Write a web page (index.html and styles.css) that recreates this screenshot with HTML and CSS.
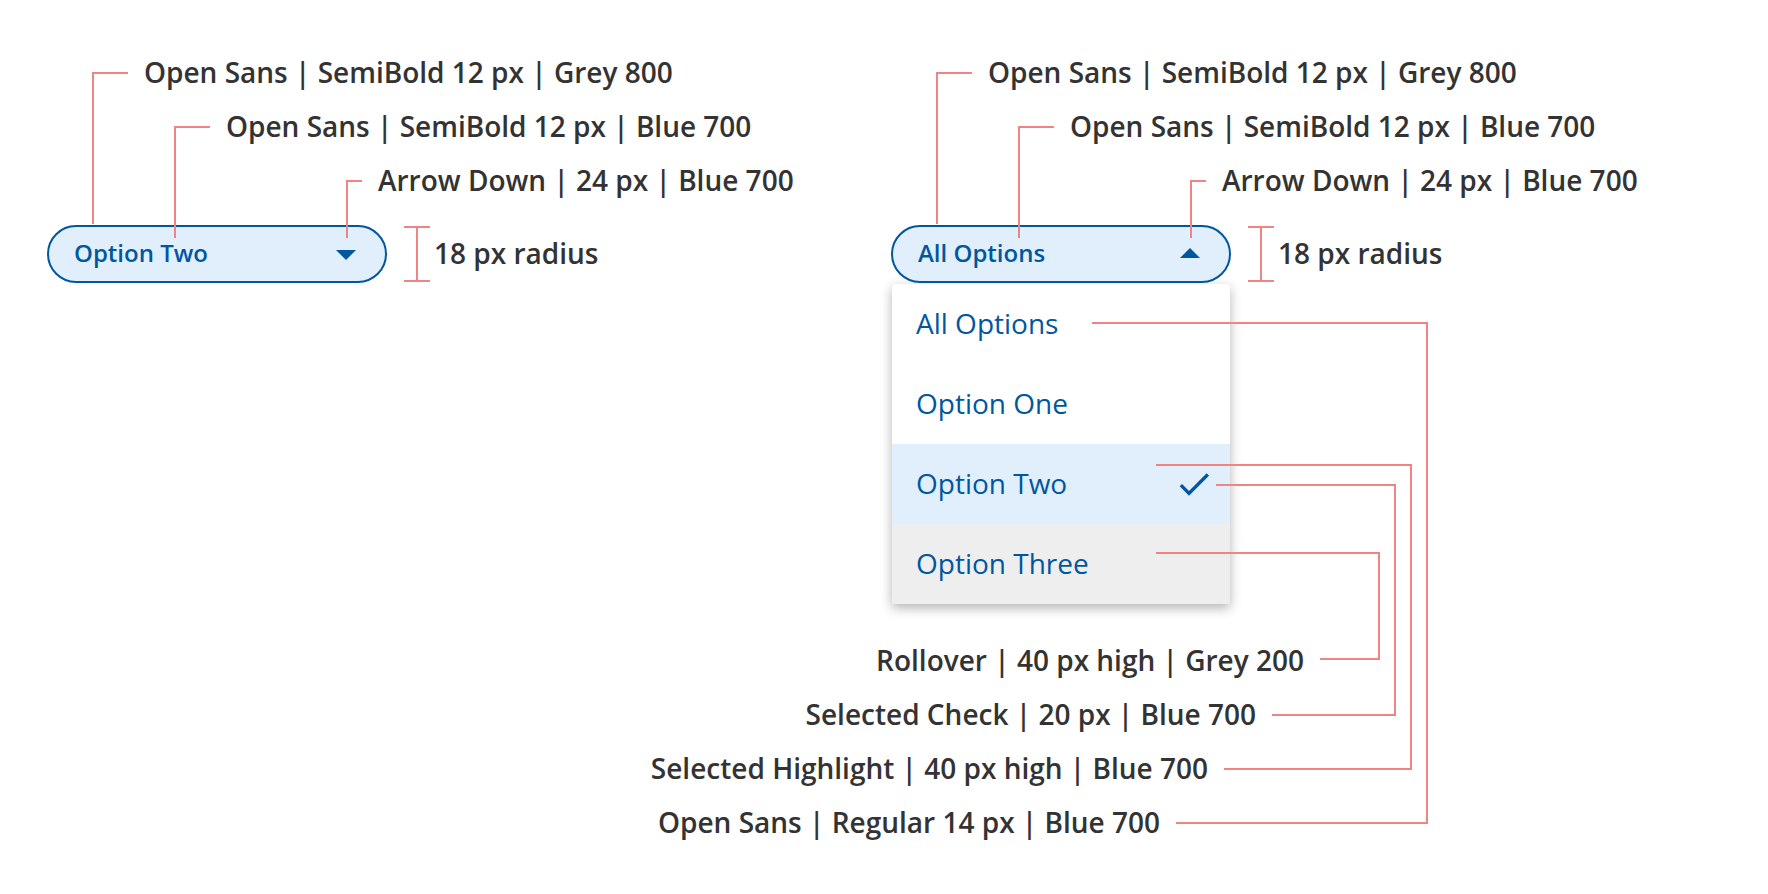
FILE: index.html
```html
<!DOCTYPE html>
<html lang="en">
<head>
<meta charset="utf-8">
<title>Dropdown specification</title>
<link rel="stylesheet" href="styles.css">
</head>
<body>
<main class="spec">
  <section class="panel" aria-label="Closed dropdown">
    <ul class="notes">
      <li class="note note-container">Open Sans | SemiBold 12 px | Grey 800</li>
      <li class="note note-text">Open Sans | SemiBold 12 px | Blue 700</li>
      <li class="note note-arrow">Arrow Down | 24 px | Blue 700</li>
    </ul>
    <div class="control">
      <button class="pill" type="button" aria-haspopup="true" aria-expanded="false">
        <span class="pill-label">Option Two</span>
        <svg class="arrow" viewBox="0 0 24 24" aria-hidden="true"><path d="M7 10l5 5 5-5z"/></svg>
      </button>
      <p class="radius">18 px radius</p>
    </div>
    <svg class="leaders" width="400" height="300" aria-hidden="true">
      <path d="M81 29H46V180M163 83H128V194M315 137H300V194"/>
      <path d="M357 183H383M370 183V237M357 237H383"/>
    </svg>
  </section>

  <section class="panel" aria-label="Open dropdown">
    <ul class="notes">
      <li class="note note-container">Open Sans | SemiBold 12 px | Grey 800</li>
      <li class="note note-text">Open Sans | SemiBold 12 px | Blue 700</li>
      <li class="note note-arrow">Arrow Down | 24 px | Blue 700</li>
    </ul>
    <div class="control">
      <button class="pill" type="button" aria-haspopup="true" aria-expanded="true">
        <span class="pill-label">All Options</span>
        <svg class="arrow" viewBox="0 0 24 24" aria-hidden="true"><path d="M7 14l5-5 5 5z"/></svg>
      </button>
      <p class="radius">18 px radius</p>
    </div>
    <ul class="menu">
      <li><button class="option" type="button"><span class="option-label">All Options</span></button></li>
      <li><button class="option" type="button"><span class="option-label">Option One</span></button></li>
      <li><button class="option selected" type="button"><span class="option-label">Option Two</span>
        <svg class="check" viewBox="0 0 24 24" aria-hidden="true"><path d="M9 16.17L4.83 12l-1.42 1.41L9 19 21 7l-1.41-1.41z"/></svg>
      </button></li>
      <li><button class="option hovered" type="button"><span class="option-label">Option Three</span></button></li>
    </ul>
    <ul class="footnotes">
      <li class="note foot-rollover">Rollover | 40 px high | Grey 200</li>
      <li class="note foot-check">Selected Check | 20 px | Blue 700</li>
      <li class="note foot-highlight">Selected Highlight | 40 px high | Blue 700</li>
      <li class="note foot-option">Open Sans | Regular 14 px | Blue 700</li>
    </ul>
    <svg class="leaders" width="540" height="800" aria-hidden="true">
      <path d="M81 29H46V180M163 83H128V194M315 137H300V194"/>
      <path d="M357 183H383M370 183V237M357 237H383"/>
      <path d="M265 509H488V615H429"/>
      <path d="M325 441H504V671H381"/>
      <path d="M265 421H520V725H333"/>
      <path d="M201 279H536V779H285"/>
    </svg>
  </section>
</main>
</body>
</html>
```
FILE: styles.css
```css
:root {
  --blue-700: #0057a0;
  --blue-50: #e1effd;
  --grey-200: #eeeeee;
  --grey-800: #333333;
  --leader: #f08383;
}

* {
  box-sizing: border-box;
}

body {
  margin: 0;
  background: #ffffff;
  color: var(--grey-800);
  font-family: "Open Sans", sans-serif;
  font-size: 28px;
}

ul {
  margin: 0;
  padding: 0;
  list-style: none;
}

button {
  font-family: inherit;
  color: var(--blue-700);
  cursor: pointer;
}

.spec {
  display: grid;
  grid-template-columns: 1fr 1fr;
  padding: 44px 33px 36px 47px;
}

.panel {
  position: relative;
}

.notes {
  padding-top: 1px;
}

.note {
  display: flex;
  font-weight: 600;
  line-height: 54px;
  white-space: nowrap;
}

.note-container {
  padding-left: 97px;
}

.note-text {
  padding-left: 179px;
}

.note-arrow {
  padding-left: 331px;
}

.control {
  display: flex;
  align-items: center;
  gap: 47px;
  margin-top: 18px;
}

.pill {
  display: flex;
  align-items: center;
  justify-content: space-between;
  width: 340px;
  height: 58px;
  padding: 0 15px 0 25px;
  border: 2px solid var(--blue-700);
  border-radius: 29px;
  background: var(--blue-50);
  font-size: 24px;
  font-weight: 600;
}

.pill-label {
  padding-bottom: 4px;
}

.arrow {
  width: 48px;
  height: 48px;
  fill: currentColor;
}

.radius {
  margin: 0;
  padding-bottom: 2px;
  font-weight: 600;
  line-height: 54px;
  white-space: nowrap;
}

.menu {
  width: 338px;
  margin: 1px 0 0 1px;
  border-radius: 4px 4px 0 0;
  background: #ffffff;
  box-shadow: 0 4px 12px rgba(0, 0, 0, 0.3);
}

.option {
  display: flex;
  align-items: center;
  justify-content: space-between;
  width: 100%;
  height: 80px;
  padding: 0 16px 0 24px;
  border: 0;
  background: none;
  font-size: 28px;
}

.option-label {
  padding-bottom: 2px;
}

.selected {
  background: var(--blue-50);
}

.hovered {
  background: var(--grey-200);
}

.check {
  width: 40px;
  height: 40px;
  fill: currentColor;
}

.footnotes {
  width: 537px;
  margin-top: 29px;
}

.footnotes .note {
  justify-content: flex-end;
}

.foot-rollover {
  padding-right: 124px;
}

.foot-check {
  padding-right: 172px;
}

.foot-highlight {
  padding-right: 220px;
}

.foot-option {
  padding-right: 268px;
}

.leaders {
  position: absolute;
  top: 0;
  left: 0;
  fill: none;
  stroke: var(--leader);
  stroke-width: 2;
  pointer-events: none;
}
```
